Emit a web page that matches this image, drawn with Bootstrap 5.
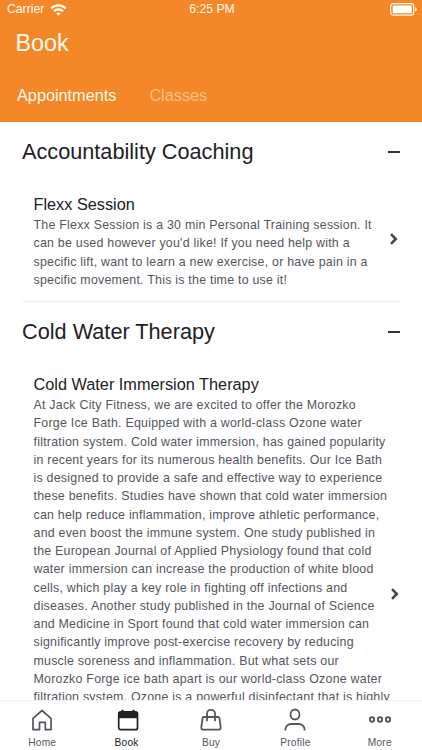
<!DOCTYPE html>
<html lang="en">
<head>
<meta charset="utf-8">
<meta name="viewport" content="width=device-width, initial-scale=1">
<title>Book</title>
<link href="https://cdn.jsdelivr.net/npm/bootstrap@5.3.0/dist/css/bootstrap.min.css" rel="stylesheet">
<style>
body{font-family:"Liberation Sans",Arial,sans-serif;color:#212124;background:#fff}
.screen{width:422px;height:750px}
.app-header{background:#f48727;height:122px;color:#fffaf0}
.status{height:19px;font-size:12.2px;line-height:19px;padding:0 5px 0 7px}
.status>*{flex:1 1 0}
.wifi{margin-left:6px}
.app-title{font-size:23.3px;line-height:28px;margin:10px 0 0 15.5px;font-weight:400}
.tabs{margin:24px 0 0 17px;gap:33px;font-size:16.25px;line-height:28px}
.tabs a{color:#fffaf0}
.tabs a.off{color:#fabf8a}
.feed{padding:0 22px}
.cat{height:60px}
.cat h2{font-size:21.7px;line-height:28px;font-weight:400}
.minus{width:12px;height:1.5px;background:#333338}
.session{padding-left:11.5px}
.session h3{font-size:16.3px;line-height:20px;font-weight:400}
.session p{font-size:12.4px;line-height:18.27px;letter-spacing:.235px;color:#55555d;white-space:nowrap;padding-top:2px}
.s1{padding-top:12px;padding-bottom:17px;height:120px;border-bottom:1px solid #eeeef0}
.s1 .copy{height:92px}
.s2{padding-top:12px;height:452px}
.go{margin-right:1px}
.tabbar{height:50px;background:#fff;border-top:1px solid #f4f4f6;color:#55555d;font-size:10.2px;letter-spacing:.2px;line-height:12px}
.tabbar a{width:84.4px;padding-top:7px;color:inherit}
.tabbar a.on{color:#212126}
.tabbar svg{margin-bottom:5px}
</style>
<script src="https://cdn.jsdelivr.net/npm/bootstrap@5.3.0/dist/js/bootstrap.bundle.min.js"></script>
</head>
<body>
<div class="screen d-flex flex-column overflow-hidden">
<header class="app-header flex-shrink-0">
<div class="status d-flex align-items-center">
<div class="d-flex align-items-center"><span>Carrier</span>
<svg class="wifi" width="17" height="12" viewBox="0 0 16 12" fill="none" stroke="currentColor" stroke-width="2.2"><path d="M.8 4.400a10.300 10.300 0 0 1 14.400 0M3.400 7.300a6.600 6.600 0 0 1 9.200 0"/><path d="M8 11.800 5.700 9.500a3.400 3.400 0 0 1 4.600 0z" fill="currentColor" stroke="none"/></svg></div>
<div class="text-center">6:25 PM</div>
<div class="d-flex justify-content-end"><svg width="27" height="13" viewBox="0 0 27 13"><rect x=".7" y=".7" width="23" height="11.400" rx="2.600" fill="none" stroke="currentColor" stroke-width="1.200"/><rect x="2.700" y="2.600" width="19" height="7.600" rx=".8" fill="#fff"/><path d="M25 4.200q2 .8 2 2.200t-2 2.200z" fill="currentColor"/></svg></div>
</div>
<h1 class="app-title">Book</h1>
<nav class="tabs d-flex"><a class="text-decoration-none" href="#">Appointments</a><a class="off text-decoration-none" href="#">Classes</a></nav>
</header>
<main class="feed flex-grow-1 overflow-hidden">
<section>
<div class="cat d-flex align-items-center justify-content-between"><h2 class="m-0">Accountability Coaching</h2><span class="minus"></span></div>
<div class="session s1 d-flex align-items-center justify-content-between">
<div class="copy align-self-start"><h3 class="m-0">Flexx Session</h3>
<p class="m-0">The Flexx Session is a 30 min Personal Training session. It<br>can be used however you'd like! If you need help with a<br>specific lift, want to learn a new exercise, or have pain in a<br>specific movement. This is the time to use it!</p></div>
<svg class="go flex-shrink-0" width="10" height="12" viewBox="0 0 10 12" fill="none" stroke="#424248" stroke-width="2.500"><path d="m2 1.200 4.800 4.800L2 10.800"/></svg>
</div>
</section>
<section>
<div class="cat d-flex align-items-center justify-content-between"><h2 class="m-0">Cold Water Therapy</h2><span class="minus"></span></div>
<div class="session s2 d-flex align-items-center justify-content-between">
<div class="align-self-start"><h3 class="m-0">Cold Water Immersion Therapy</h3>
<p class="m-0">At Jack City Fitness, we are excited to offer the Morozko<br>Forge Ice Bath. Equipped with a world-class Ozone water<br>filtration system. Cold water immersion, has gained popularity<br>in recent years for its numerous health benefits. Our Ice Bath<br>is designed to provide a safe and effective way to experience<br>these benefits. Studies have shown that cold water immersion<br>can help reduce inflammation, improve athletic performance,<br>and even boost the immune system. One study published in<br>the European Journal of Applied Physiology found that cold<br>water immersion can increase the production of white blood<br>cells, which play a key role in fighting off infections and<br>diseases. Another study published in the Journal of Science<br>and Medicine in Sport found that cold water immersion can<br>significantly improve post-exercise recovery by reducing<br>muscle soreness and inflammation. But what sets our<br>Morozko Forge ice bath apart is our world-class Ozone water<br>filtration system. Ozone is a powerful disinfectant that is highly</p></div>
<svg class="go flex-shrink-0" width="10" height="12" viewBox="0 0 10 12" fill="none" stroke="#424248" stroke-width="2.500"><path d="m2 1.200 4.800 4.800L2 10.800"/></svg>
</div>
</section>
</main>
<nav class="tabbar d-flex flex-shrink-0">
<a href="#" class="d-flex flex-column align-items-center text-decoration-none"><svg width="22" height="24" viewBox="0 0 22 24" fill="none" stroke="currentColor" stroke-width="1.700" stroke-linejoin="round"><path d="M2 10.300 11 2.500l9 7.800v11.300h-5.700v-7.300H8.500v7.300H2z"/></svg>Home</a>
<a href="#" class="on d-flex flex-column align-items-center text-decoration-none"><svg width="24" height="24" viewBox="-2 0 24 24"><path d="M5.500 1.700v3M16.500 1.700v3" stroke="currentColor" stroke-width="2"/><rect x="1.700" y="3.900" width="18.800" height="17.800" rx="2" fill="none" stroke="currentColor" stroke-width="1.700"/><path d="M1.500 4h19v6.200h-19z" fill="currentColor"/></svg>Book</a>
<a href="#" class="d-flex flex-column align-items-center text-decoration-none"><svg width="22" height="24" viewBox="0 0 22 24" fill="none" stroke="currentColor" stroke-width="1.800" stroke-linecap="round" stroke-linejoin="round"><path d="M3.800 9h14.400q1 0 1.200 1l1.300 9.300q.1 2.400-2 2.400H3.300q-2.100 0-2-2.400L2.600 10q.2-1 1.200-1zM7 12.500V5.800a4 4 0 0 1 8 0v6.700"/></svg>Buy</a>
<a href="#" class="d-flex flex-column align-items-center text-decoration-none"><svg width="22" height="24" viewBox="0 0 22 24" fill="none" stroke="currentColor" stroke-width="1.800"><ellipse cx="11" cy="6.500" rx="4.500" ry="5"/><path d="M1.400 22.500v-1c0-3 2.600-5.500 5.600-5.500h8c3 0 5.600 2.500 5.600 5.500v1"/></svg>Profile</a>
<a href="#" class="d-flex flex-column align-items-center text-decoration-none"><svg width="24" height="24" viewBox="0 0 24 24" fill="none" stroke="currentColor" stroke-width="1.900"><circle cx="4" cy="11.500" r="2.200"/><circle cx="12" cy="11.500" r="2.200"/><circle cx="20" cy="11.500" r="2.200"/></svg>More</a>
</nav>
</div>
</body>
</html>
